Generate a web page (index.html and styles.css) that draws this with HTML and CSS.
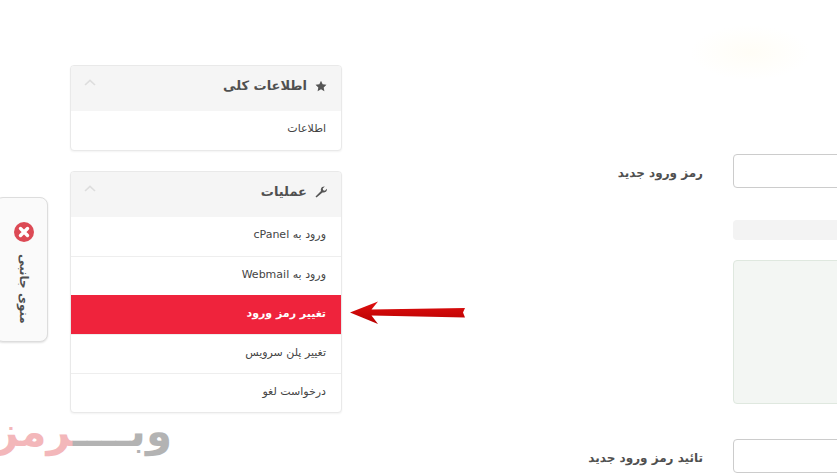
FILE: index.html
```html
<!DOCTYPE html>
<html lang="fa">
<head>
<meta charset="utf-8">
<title>تغییر رمز ورود</title>
<link rel="stylesheet" href="styles.css">
</head>
<body>
<div class="page">
  <aside class="sidebar">
    <section class="panel">
      <header class="panel-head">
        <svg class="chev" viewBox="0 0 12 7"><path d="M1 6l5-4.6L11 6" fill="none" stroke="#ddd" stroke-width="1.6"/></svg>
        <h3 class="panel-title">
          <span>اطلاعات کلی</span>
          <svg class="head-icon" viewBox="0 0 24 24"><path d="M12 1.5l3.3 7 7.7 1-5.6 5.3 1.4 7.6L12 18.7l-6.8 3.7 1.4-7.6L1 9.5l7.7-1z" fill="#555"/></svg>
        </h3>
      </header>
      <a class="item">اطلاعات</a>
    </section>
    <section class="panel">
      <header class="panel-head">
        <svg class="chev" viewBox="0 0 12 7"><path d="M1 6l5-4.6L11 6" fill="none" stroke="#ddd" stroke-width="1.6"/></svg>
        <h3 class="panel-title">
          <span>عملیات</span>
          <svg class="head-icon" viewBox="0 0 24 24"><path d="M3 23l-2-2L12 10c-1-3 0-6 2.500-8 1.500-1 3.500-1.400 5-1l-4 4 .8 3.500 3.500.8 4-4c.4 2-.2 4-1.500 5.500-2 2-4.800 2.800-7.300 2z" fill="#555"/></svg>
        </h3>
      </header>
      <a class="item">ورود به cPanel</a>
      <a class="item">ورود به Webmail</a>
      <a class="item item-active">تغییر رمز ورود</a>
      <a class="item">تغییر پلن سرویس</a>
      <a class="item">درخواست لغو</a>
    </section>
  </aside>
  <main class="form">
    <label class="label">رمز ورود جدید</label>
    <input class="input" type="password">
    <div class="meter"></div>
    <div class="notice"></div>
    <label class="label label-gap">تائید رمز ورود جدید</label>
    <input class="input input-gap" type="password">
  </main>
</div>
<div class="glow"></div>
<div class="side-tab">
  <svg class="close-icon" viewBox="0 0 20 20"><circle cx="10" cy="10" r="10" fill="#dc4a55"/><path d="M6.500 6.500l7 7m0-7l-7 7" stroke="#fff" stroke-width="3.400" stroke-linecap="round"/></svg>
  <span class="side-text">منوی جانبی</span>
</div>
<svg class="arrow" viewBox="0 0 118 26"><defs><linearGradient id="a" x1="0" y1="0" x2="0" y2="1"><stop offset="0" stop-color="#e01010"/><stop offset="1" stop-color="#b80000"/></linearGradient></defs><path d="M1 12.500L29 1.500 22.500 9.500 116 8 114 12.500 116 17.500 22.500 15.500 29 24z" fill="url(#a)"/></svg>
<div class="watermark"><span class="wm-gray">وبــــ</span><span class="wm-pink">رمز</span></div>
</body>
</html>
```
FILE: styles.css
```css
* { box-sizing: border-box; }
html, body { margin: 0; height: 100%; overflow: hidden; background: #fff; }
body { font-family: "DejaVu Sans", sans-serif; color: #444; position: relative; }
.page { display: flex; padding: 65px 0 0 70px; width: 1200px; align-items: flex-start; }
.sidebar { width: 272px; display: flex; flex-direction: column; gap: 20px; flex: none; }
.panel { border: 1px solid #e9e9e9; border-radius: 4px; background: #fff; box-shadow: 0 1px 2px rgba(0,0,0,.05); overflow: hidden; }
.panel-head { height: 45px; background: #f5f5f5; display: flex; align-items: center; justify-content: space-between; padding: 0 14px 6px 13px; }
.chev { width: 12px; height: 7px; margin-top: -7px; }
.panel-title { margin: 0; display: flex; align-items: center; gap: 8px; font-size: 13px; font-weight: 700; color: #505050; direction: rtl; flex-direction: row-reverse; }
.head-icon { width: 12px; height: 12px; flex: none; }
.item { display: block; height: 39px; line-height: 36px; padding: 0 15px; text-align: right; direction: rtl; font-size: 11px; color: #444; border-top: 1px solid #eee; }
.panel-head + .item { border-top: 0; }
.item-active { background: #ef233c; color: #fff; font-weight: 700; border-top-color: #ef233c; }
.form { flex: none; width: 858px; padding-top: 89px; display: grid; grid-template-columns: 361px 30px 467px; }
.label { grid-column: 1; text-align: right; direction: rtl; font-size: 12px; font-weight: 700; color: #505050; line-height: 38px; }
.input { grid-column: 3; height: 34px; border: 1px solid #ccc; border-radius: 4px; background: #fff; }
.meter { grid-column: 3; height: 20px; margin-top: 28px; background: #f3f3f3; border-radius: 4px; }
.notice { grid-column: 3; height: 144px; margin-top: 20px; background: #f3f6f3; border: 1px solid #dfe8df; border-radius: 4px; }
.label-gap { margin-top: 35px; }
.input-gap { margin-top: 35px; }
.glow { position: absolute; left: 690px; top: 25px; width: 120px; height: 55px; background: radial-gradient(closest-side, #fffdf6, #fff); }
.side-tab { position: absolute; left: -5px; top: 197px; width: 53px; height: 145px; background: #fafafa; border: 1px solid #ddd; border-radius: 8px; box-shadow: 0 1px 2px rgba(0,0,0,.12); display: flex; flex-direction: column; align-items: center; padding: 24px 0 0 5px; }
.close-icon { width: 20px; height: 20px; flex: none; }
.side-text { writing-mode: vertical-rl; direction: rtl; margin-top: 12px; font-size: 12px; font-weight: 700; color: #505050; white-space: nowrap; }
.arrow { position: absolute; left: 349px; top: 300px; width: 118px; height: 26px; }
.watermark { position: absolute; left: 20px; top: 402px; width: 152px; direction: rtl; white-space: nowrap; font-size: 42px; font-weight: 700; line-height: 60px; text-align: left; }
.wm-gray { color: #b3b3b3; }
.wm-pink { color: #f3b7ba; }
```
